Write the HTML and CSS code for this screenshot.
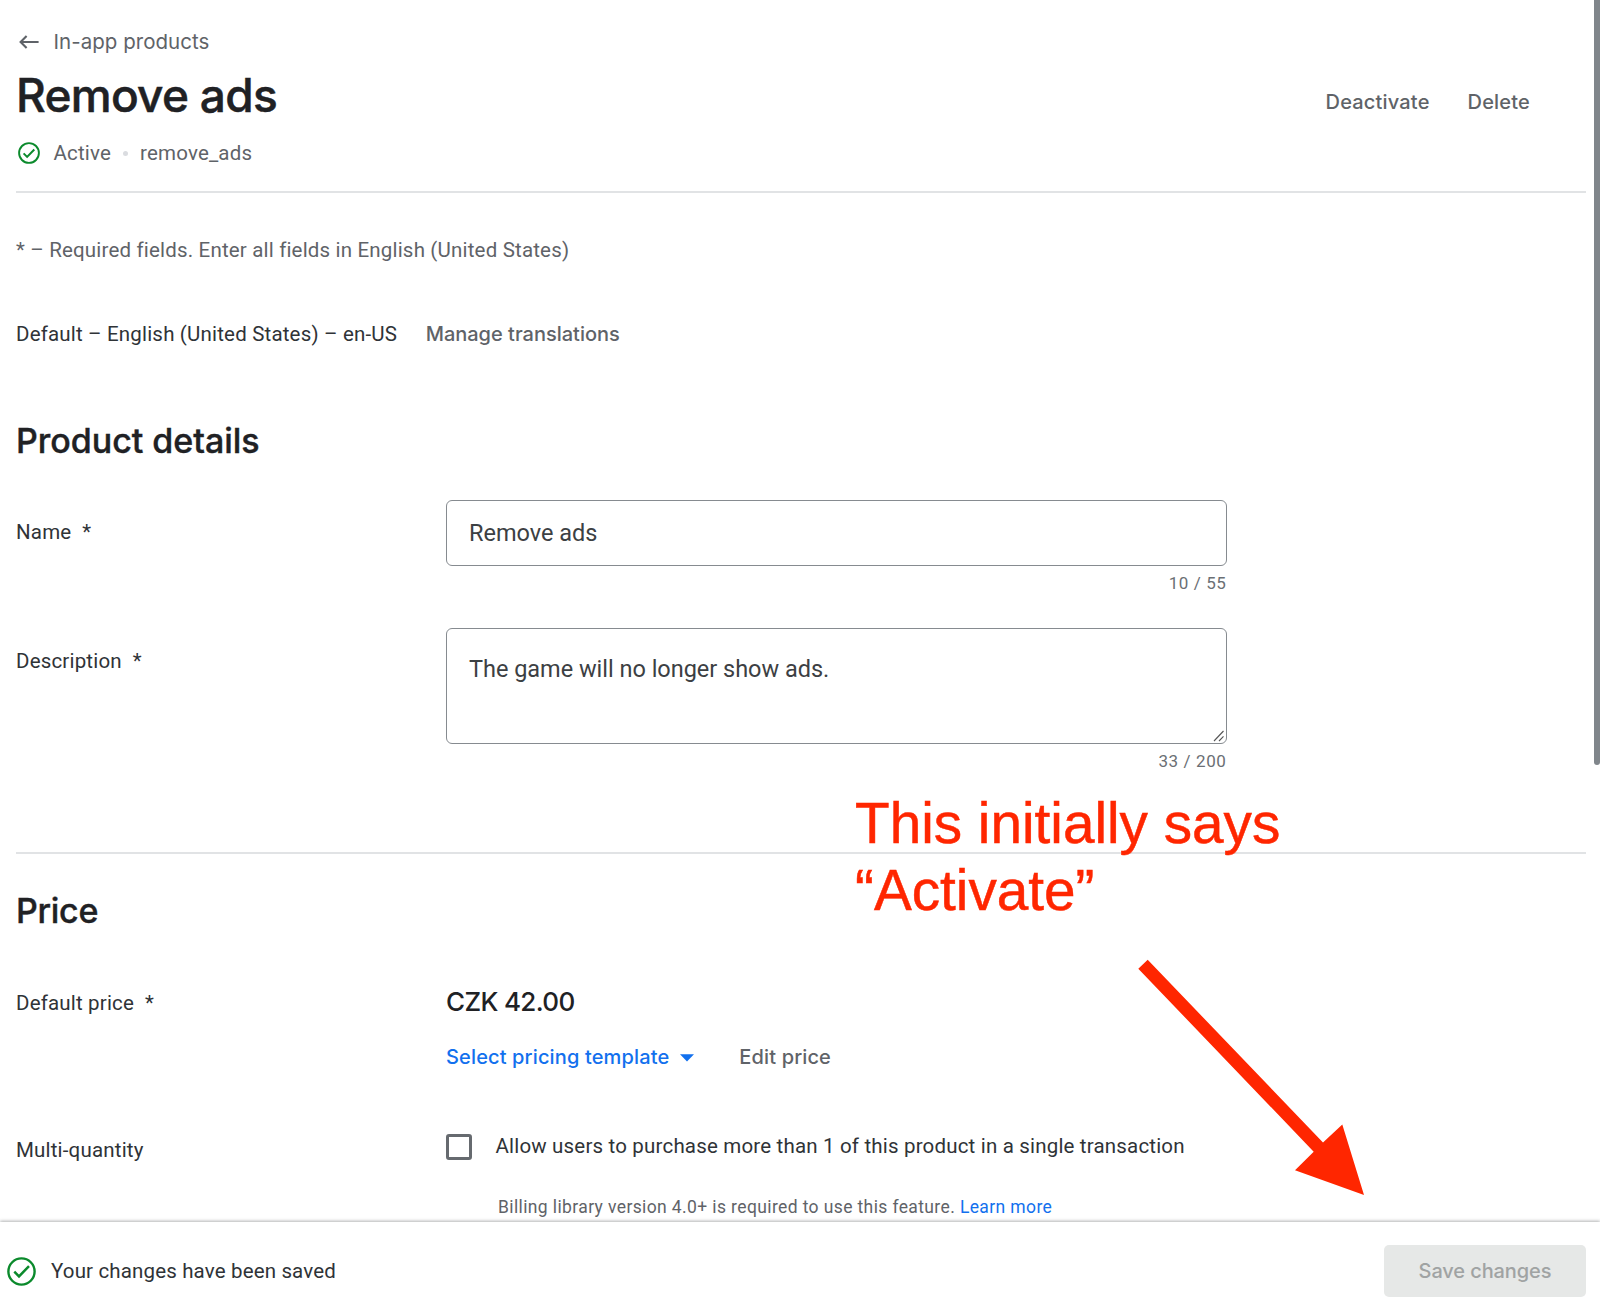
FILE: index.html
```html
<!DOCTYPE html>
<html lang="en">
<head>
<meta charset="utf-8">
<title>Remove ads – In-app products</title>
<link rel="stylesheet" href="styles.css">
</head>
<body>
<main class="page">
  <header class="header">
    <div class="heading">
      <a class="breadcrumb">
        <svg class="back" width="26" height="20" viewBox="0 0 26 20"><path d="M22.6 10H4.6M10.6 4L4.6 10l6 6" fill="none" stroke="#5f6368" stroke-width="2.1"/></svg>
        <span class="crumb-text">In-app products</span>
      </a>
      <h1 class="title">Remove ads</h1>
      <div class="status">
        <svg class="status-icon" width="22" height="22" viewBox="0 0 22 22"><circle cx="11" cy="11" r="9.9" fill="none" stroke="#0b8a2c" stroke-width="1.9"/><path d="M5.6 11.4l3.5 3.5 7.2-7.4" fill="none" stroke="#0b8a2c" stroke-width="2"/></svg>
        <span class="state">Active</span>
        <span class="dot"></span>
        <span class="sku">remove_ads</span>
      </div>
    </div>
    <nav class="actions">
      <a class="deactivate">Deactivate</a>
      <a class="delete">Delete</a>
    </nav>
  </header>

  <p class="required">* – Required fields. Enter all fields in English (United States)</p>
  <div class="language">
    <span class="locale">Default – English (United States) – en-US</span>
    <a class="manage">Manage translations</a>
  </div>

  <section class="details">
    <h2 class="section-title details-title">Product details</h2>
    <div class="row">
      <div class="label">Name<span class="star">*</span></div>
      <div class="field">
        <div class="input"><span class="name-value">Remove ads</span></div>
        <div class="counter">10 / 55</div>
      </div>
    </div>
    <div class="row description">
      <div class="label">Description<span class="star">*</span></div>
      <div class="field">
        <div class="input textarea"><span class="desc-value">The game will no longer show ads.</span>
          <svg class="grip" width="12" height="12" viewBox="0 0 12 12"><path d="M1 11L10.5 1M6 11l4.500-4.700" fill="none" stroke="#555" stroke-width="1.1"/></svg>
        </div>
        <div class="counter">33 / 200</div>
      </div>
    </div>
  </section>

  <section class="pricing">
    <h2 class="section-title price-title">Price</h2>
    <div class="row price-row">
      <div class="label price-label">Default price<span class="star">*</span></div>
      <div class="field">
        <div class="amount">CZK 42.00</div>
        <div class="price-actions">
          <a class="template">Select pricing template</a>
          <svg class="caret" width="14" height="8" viewBox="0 0 14 8"><path d="M0 .3h14L7 7.600z" fill="#1270ee"/></svg>
          <a class="edit">Edit price</a>
        </div>
      </div>
    </div>
    <div class="row quantity-row">
      <div class="label quantity-label">Multi-quantity</div>
      <div class="field">
        <div class="option"><span class="checkbox"></span><span class="option-text">Allow users to purchase more than 1 of this product in a single transaction</span></div>
        <div class="hint"><span class="hint-text">Billing library version 4.0+ is required to use this feature.</span> <a class="learn">Learn more</a></div>
      </div>
    </div>
  </section>
</main>

<footer class="footer">
  <svg class="saved-icon" width="29" height="29" viewBox="0 0 29 29"><circle cx="14.500" cy="14.500" r="13.100" fill="none" stroke="#0b8a2c" stroke-width="2.400"/><path d="M7.300 14.700l4.700 4.700 10-10.300" fill="none" stroke="#0b8a2c" stroke-width="2.500"/></svg>
  <span class="saved">Your changes have been saved</span>
  <button class="save" disabled><span class="save-text">Save changes</span></button>
</footer>

<div class="scrollbar"></div>
<p class="note">This initially says<br>“Activate”</p>
<svg class="arrow" width="228" height="238" viewBox="1137 958 228 238"><path d="M1138.300 968.700l9.400-9L1323 1142.500l19.300-18L1364 1195l-69-24.700 18.700-18.600z" fill="#ff2600"/></svg>
</body>
</html>
```
FILE: styles.css
```css
* { box-sizing: border-box; }
body {
  margin: 0;
  width: 1600px;
  height: 1306px;
  overflow: hidden;
  position: relative;
  display: flex;
  flex-direction: column;
  background: #fff;
  color: #2f3337;
  font-family: Roboto, sans-serif;
  font-size: 20.5px;
  line-height: 28px;
  letter-spacing: 0.18px;
}
h1, h2, p { margin: 0; font-weight: 500; }
span, a { white-space: nowrap; }

.page { height: 1222px; overflow: hidden; padding: 0 14px 0 16px; }

.header {
  display: flex;
  justify-content: space-between;
  height: 193px;
  border-bottom: 2px solid #e1e3e5;
}
.heading { padding-top: 28px; }
.breadcrumb { display: flex; align-items: center; color: #5f6368; font-family: Inter, sans-serif; letter-spacing: 0.03px; }
.back { width: 26px; margin-right: 11.5px; }
.title {
  margin-top: 11px;
  margin-bottom: 16px;
  color: #202124;
  font: 500 46px/56px Inter, sans-serif;
  letter-spacing: -0.72px;
  -webkit-text-stroke: 0.5px #202124;
}
.status { display: flex; align-items: center; color: #5f6368; }
.status-icon { margin: 0 13.5px 0 2px; }
.dot { width: 5px; height: 5px; margin: 0 12px; border-radius: 50%; background: #dadce0; }
.actions {
  display: flex;
  gap: 38px;
  padding: 88px 56px 0 0;
  color: #5f6368;
  font: 500 20px/28px Inter, sans-serif;
}

.required { margin-top: 43px; color: #5f6368; font-weight: 400; }
.language { display: flex; gap: 28.5px; margin-top: 56px; }
.manage { color: #5f6368; font: 500 20px/28px Inter, sans-serif; letter-spacing: 0; }

.section-title { color: #202124; font: 500 34px/44px Inter, sans-serif; letter-spacing: -0.03px; -webkit-text-stroke: 0.4px #202124; }
.details { height: 506px; padding-top: 71px; border-bottom: 2px solid #e1e3e5; }
.row { display: grid; grid-template-columns: 430px 780.5px; }
.details-title { margin-bottom: 37px; }
.label { line-height: 65px; }
.star { margin-left: 11px; }
.input {
  position: relative;
  height: 66px;
  padding: 0 22px;
  border: 1.5px solid #868b90;
  border-radius: 6px;
  color: #3c4043;
  font-size: 23.5px;
  line-height: 64px;
  letter-spacing: -0.02px;
}
.counter { margin-top: 5px; color: #6b6f74; font-size: 17px; line-height: 24px; text-align: right; letter-spacing: 0.6px; }
.description { margin-top: 33px; }
.description .label { line-height: 66px; }
.textarea { height: 116px; padding-top: 23px; line-height: 35px; }
.grip { position: absolute; right: 1px; bottom: 1px; }

.price-title { margin: 35px 0 47px; letter-spacing: -0.3px; }
.price-label { line-height: 46px; }
.amount { padding-top: 1px; color: #202124; font: 500 26px/42px Inter, sans-serif; letter-spacing: -0.65px; }
.price-actions { display: flex; align-items: center; margin-top: 20px; font: 500 20px/28px Inter, sans-serif; letter-spacing: 0.14px; }
.template { color: #1270ee; }
.caret { margin: 2px 45.5px 0 10.5px; }
.edit { color: #5f6368; }
.quantity-row { margin-top: 61px; }
.quantity-label { padding-top: 4px; line-height: 29px; }
.option { display: flex; }
.checkbox { width: 26px; height: 26px; margin: 2px 23.5px 0 0; border: 3px solid #666a6f; border-radius: 3px; }
.hint { margin: 35px 0 0 52px; color: #5f6368; font-size: 17.5px; line-height: 24px; letter-spacing: 0.38px; white-space: nowrap; }
.learn { color: #1270ee; }

.footer {
  position: relative;
  display: flex;
  align-items: center;
  height: 84px;
  padding: 14px 14px 0 7px;
  background: #fff;
  box-shadow: 0 -1px 3px rgba(60, 64, 67, 0.4);
}
.saved { margin-left: 15px; letter-spacing: 0.15px; }
.save {
  width: 202px;
  height: 52px;
  margin-left: auto;
  border: 0;
  border-radius: 5px;
  background: #e6e8e7;
  color: #a0a3a3;
  font: 500 20px/28px Inter, sans-serif;
  letter-spacing: -0.1px;
}

.scrollbar { position: absolute; top: 0; right: 0; width: 6px; height: 765px; border-radius: 0 0 3px 3px; background: #80868b; }
.note {
  position: absolute;
  left: 855px;
  top: 790px;
  color: #ff2600;
  font: 400 56.7px/67.4px "Liberation Sans", sans-serif;
  letter-spacing: 0;
  white-space: nowrap;
  -webkit-text-stroke: 0.5px #ff2600;
}
.arrow { position: absolute; left: 1137px; top: 958px; }
```
